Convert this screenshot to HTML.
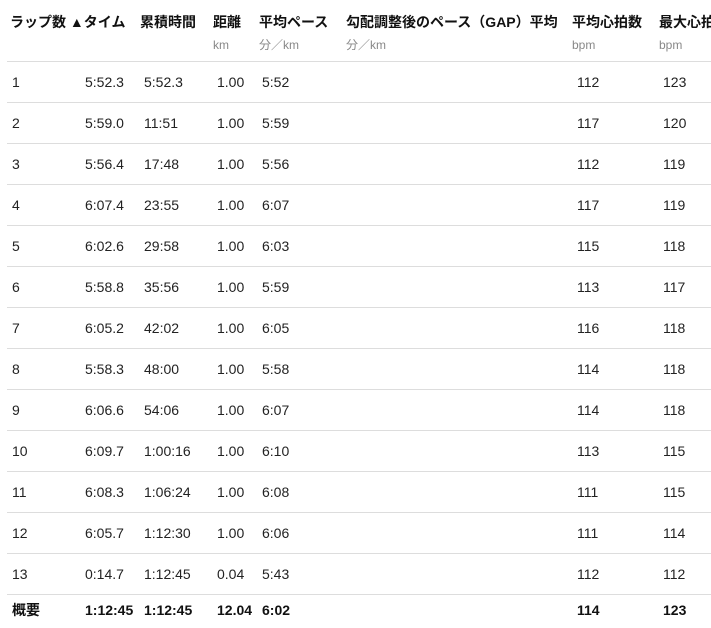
<!DOCTYPE html>
<html><head><meta charset="utf-8"><style>
body{margin:0;width:711px;height:628px;overflow:hidden;background:#fff;font-family:"Liberation Sans","Noto Sans CJK JP",sans-serif;color:#222;position:relative}
.t{position:absolute;white-space:nowrap;font-size:14px;line-height:16px}
.h{font-weight:bold;font-size:14px;top:14px;color:#111}
.u{font-size:12px;color:#888;top:37px}
.b{font-weight:bold;color:#111}
.l{position:absolute;left:7px;right:0;height:1px;background:#ddd}
</style></head><body>
<div class="t h" style="left:10px">ラップ数 ▲タイム</div>
<div class="t h" style="left:140px">累積時間</div>
<div class="t h" style="left:213px">距離</div>
<div class="t h" style="left:259px">平均ペース</div>
<div class="t h" style="left:346px">勾配調整後のペース（GAP）平均</div>
<div class="t h" style="left:572px">平均心拍数</div>
<div class="t h" style="left:659px">最大心拍数</div>
<div class="t u" style="left:213px">km</div>
<div class="t u" style="left:259px">分／km</div>
<div class="t u" style="left:346px">分／km</div>
<div class="t u" style="left:572px">bpm</div>
<div class="t u" style="left:659px">bpm</div>
<div id="r"></div>
<script>
var d=[["1","5:52.3","5:52.3","1.00","5:52","112","123"],["2","5:59.0","11:51","1.00","5:59","117","120"],["3","5:56.4","17:48","1.00","5:56","112","119"],["4","6:07.4","23:55","1.00","6:07","117","119"],["5","6:02.6","29:58","1.00","6:03","115","118"],["6","5:58.8","35:56","1.00","5:59","113","117"],["7","6:05.2","42:02","1.00","6:05","116","118"],["8","5:58.3","48:00","1.00","5:58","114","118"],["9","6:06.6","54:06","1.00","6:07","114","118"],["10","6:09.7","1:00:16","1.00","6:10","113","115"],["11","6:08.3","1:06:24","1.00","6:08","111","115"],["12","6:05.7","1:12:30","1.00","6:06","111","114"],["13","0:14.7","1:12:45","0.04","5:43","112","112"],["概要","1:12:45","1:12:45","12.04","6:02","114","123"]];
var x=[12,85,144,217,262,577,663],h="";
for(var i=0;i<d.length;i++){var ly=61+41*i;h+='<div class="l" style="top:'+ly+'px"></div>';var ty=(i==13?602:ly+13);for(var j=0;j<7;j++)h+='<div class="t'+(i==13?' b':'')+'" style="left:'+x[j]+'px;top:'+ty+'px">'+d[i][j]+'</div>';}
document.getElementById("r").innerHTML=h;
</script>
</body></html>
